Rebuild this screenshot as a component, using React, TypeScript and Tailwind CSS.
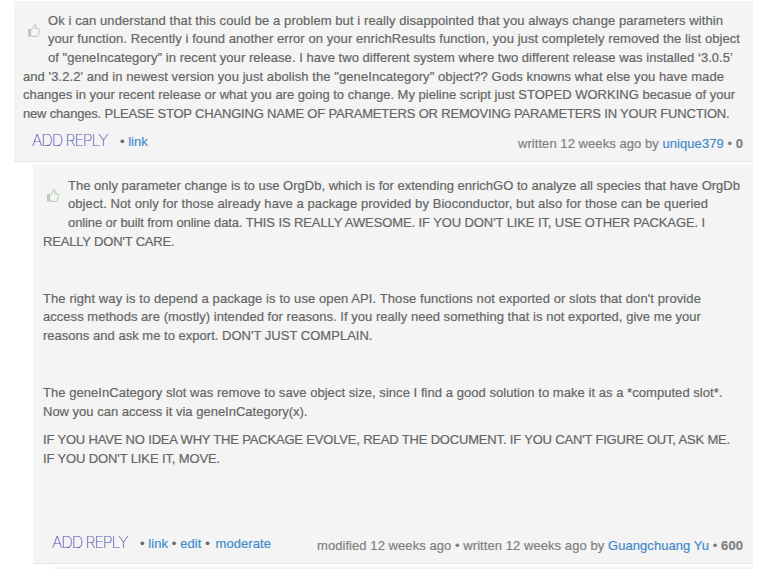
import React, { useLayoutEffect, useRef, useState } from "react";

type FitProps = { w: number; className?: string; children: React.ReactNode };

// Spreads the text over `w` pixels by tracking it evenly.
function Fit({ w, className = "", children }: FitProps) {
  const ref = useRef<HTMLSpanElement>(null);
  const [tracking, setTracking] = useState(0);
  useLayoutEffect(() => {
    const el = ref.current;
    if (!el) return;
    const natural = el.getBoundingClientRect().width;
    const count = (el.textContent || "").length;
    setTracking((w - natural) / count);
  }, [w]);
  return (
    <div className={"whitespace-nowrap " + className} style={{ width: w }}>
      <span ref={ref} style={{ letterSpacing: tracking + "px" }}>
        {children}
      </span>
    </div>
  );
}

function Line({ w, indent, children }: { w: number; indent?: boolean; children: string }) {
  return (
    <Fit w={w} className={"h-[18.57px] " + (indent ? "ml-[25px]" : "")}>
      {children}
    </Fit>
  );
}

function Thumb() {
  return (
    <svg
      viewBox="0 0 12 13"
      className="absolute left-[14px] top-[22.5px] h-[13px] w-[12px]"
      fill="none"
      stroke="#b3c5ad"
      strokeWidth="1"
      strokeLinejoin="round"
    >
      <path d="M.6 5.600h2v6.400h-2z" fill="#c3d2be" />
      <path d="M2.600 6C4.500 5 6 3.600 6.500.7c1.600-.4 2 1.700 1.200 3.900h2.600c1.200 0 1.300 1.300.8 1.800.4.700.3 1.500-.2 1.900.3.700.1 1.400-.4 1.800 0 1.400-.6 2.300-1.600 2.300H5.600c-1 0-2-.5-3-.5" />
    </svg>
  );
}

function Reply() {
  return (
    <a className="w-[76px] whitespace-nowrap font-['Inter',sans-serif] text-[16px] font-thin tracking-[-1px] text-[#3a35b0]">
      ADD REPLY
    </a>
  );
}

const link = "text-[#428bca]";

export default function App() {
  return (
    <main className="h-[569px] w-[770px] overflow-hidden bg-white pt-px font-['Liberation_Sans',Arial,sans-serif] text-[13px] leading-[18.57px] text-[#666] [-webkit-text-stroke:0.2px_currentColor]">
      <article className="relative ml-[14px] h-[161px] w-[739px] border-b border-[#e6e6e6] bg-[#f4f4f4] pl-[9px] pt-[10.9px]">
        <Thumb />
        <Line w={675} indent>Ok i can understand that this could be a problem but i really disappointed that you always change parameters within</Line>
        <Line w={692} indent>your function. Recently i found another error on your enrichResults function, you just completely removed the list object</Line>
        <Line w={685} indent>of "geneIncategory" in recent your release. I have two different system where two different release was installed ‘3.0.5’</Line>
        <Line w={701}>and '3.2.2' and in newest version you just abolish the "geneIncategory" object?? Gods knowns what else you have made</Line>
        <Line w={712}>changes in your recent release or what you are going to change. My pieline script just STOPED WORKING becasue of your</Line>
        <Line w={706.5}>new changes. PLEASE STOP CHANGING NAME OF PARAMETERS OR REMOVING PARAMETERS IN YOUR FUNCTION.</Line>
        <footer className="mt-[8.1px] flex pl-[9px] pr-[10px]">
          <Reply />
          <span className="ml-3 mt-0.5 whitespace-nowrap">• <a className={link}>link</a></span>
          <Fit w={225} className="ml-auto mt-1 text-[#7f7f7f]">
            written 12 weeks ago by <a className={link}>unique379</a> • <b>0</b>
          </Fit>
        </footer>
      </article>
      <article className="relative ml-[33px] mt-[3px] h-[399px] w-[720px] border-b border-[#e6e6e6] bg-[#f4f4f4] pl-[10px] pt-[11.9px]">
        <div className="absolute left-0 top-px"><Thumb /></div>
        <Line w={672} indent>The only parameter change is to use OrgDb, which is for extending enrichGO to analyze all species that have OrgDb</Line>
        <Line w={640} indent>object. Not only for those already have a package provided by Bioconductor, but also for those can be queried</Line>
        <Line w={637} indent>online or built from online data. THIS IS REALLY AWESOME. IF YOU DON'T LIKE IT, USE OTHER PACKAGE. I</Line>
        <Line w={131.5}>REALLY DON'T CARE.</Line>
        <div className="mt-[38.57px]">
          <Line w={658}>The right way is to depend a package is to use open API. Those functions not exported or slots that don't provide</Line>
          <Line w={658}>access methods are (mostly) intended for reasons. If you really need something that is not exported, give me your</Line>
          <Line w={329.5}>reasons and ask me to export. DON'T JUST COMPLAIN.</Line>
        </div>
        <div className="mt-[38.57px]">
          <Line w={679.5}>The geneInCategory slot was remove to save object size, since I find a good solution to make it as a *computed slot*.</Line>
          <Line w={264.5}>Now you can access it via geneInCategory(x).</Line>
        </div>
        <div className="mt-[10px]">
          <Line w={687}>IF YOU HAVE NO IDEA WHY THE PACKAGE EVOLVE, READ THE DOCUMENT. IF YOU CAN'T FIGURE OUT, ASK ME.</Line>
          <Line w={177}>IF YOU DON'T LIKE IT, MOVE.</Line>
        </div>
        <footer className="mt-[65.1px] flex pl-[9px] pr-[10px]">
          <Reply />
          <Fit w={131} className="ml-3 mt-0.5">
            • <a className={link}>link</a> • <a className={link}>edit</a> • <a className={link + " ml-0.5"}>moderate</a>
          </Fit>
          <Fit w={426} className="ml-auto mt-1 text-[#7f7f7f]">
            modified 12 weeks ago • written 12 weeks ago by <a className={link}>Guangchuang Yu</a> • <b>600</b>
          </Fit>
        </footer>
      </article>
      <div className="ml-[53px] mt-[3px] h-3 w-[700px] bg-[#f4f4f4]" />
    </main>
  );
}
